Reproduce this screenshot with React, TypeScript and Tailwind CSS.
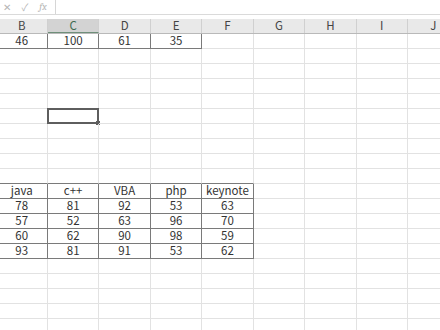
import React from 'react';

const COLS = ['B', 'C', 'D', 'E', 'F', 'G', 'H', 'I', 'J'];
const ROW_COUNT = 20;

// row index -> column index -> value
const DATA: Record<number, Record<number, string>> = {
  0: { 0: '46', 1: '100', 2: '61', 3: '35' },
  10: { 0: 'java', 1: 'c++', 2: 'VBA', 3: 'php', 4: 'keynote' },
  11: { 0: '78', 1: '81', 2: '92', 3: '53', 4: '63' },
  12: { 0: '57', 1: '52', 2: '63', 3: '96', 4: '70' },
  13: { 0: '60', 1: '62', 2: '90', 3: '98', 4: '59' },
  14: { 0: '93', 1: '81', 2: '91', 3: '53', 4: '62' },
};

function inTable(r: number, c: number) {
  if (r === 0) return c >= 0 && c <= 3;
  if (r >= 10 && r <= 14) return c >= 0 && c <= 4;
  return false;
}

const SEL = { r: 5, c: 1 };

function Cell({ r, c }: { r: number; c: number }) {
  const value = DATA[r]?.[c];
  const darkR = inTable(r, c) || inTable(r, c + 1);
  const darkB = inTable(r, c) || inTable(r + 1, c);
  const selected = r === SEL.r && c === SEL.c;
  return (
    <div
      className={[
        'relative h-[15px] border-r border-b flex items-center justify-center text-[11.5px] leading-none text-[#333]',
        darkR ? 'border-r-[#7a7a7a]' : 'border-r-[#e2e2e2]',
        darkB ? 'border-b-[#7a7a7a]' : 'border-b-[#e2e2e2]',
      ].join(' ')}
    >
      {value}
      {selected && (
        <span className="absolute -left-px -top-px -right-px -bottom-px border-2 border-[#5e5e5e]">
          <span className="absolute -right-[3px] -bottom-[3px] w-[4px] h-[4px] bg-[#5e5e5e]" />
        </span>
      )}
    </div>
  );
}

export default function App() {
  return (
    <div
      className="w-[440px] h-[330px] overflow-hidden bg-white"
      style={{ fontFamily: '"Noto Sans CJK SC", "Noto Sans", sans-serif' }}
    >
      {/* formula bar */}
      <div className="h-[15px] flex border-b border-[#dadada]">
        <div className="w-[55px] flex items-center text-[#b5b5b5] text-[10px] leading-none">
          <span className="ml-[2px] w-[10px] text-center">✕</span>
          <span className="ml-[8px] w-[10px] text-center">✓</span>
          <span className="ml-[8px] w-[10px] text-center italic font-serif">fx</span>
        </div>
        <div className="w-px bg-[#d6d6d6]" />
        <div className="flex-1" />
      </div>
      <div className="h-[4px]" />

      <div className="ml-[-3.5px]">
        {/* column headers */}
        <div className="grid grid-cols-[repeat(9,51.45px)] h-[15px] bg-[#e9e9e9] border-b border-[#b9b9b9]">
          {COLS.map((l, i) => (
            <div
              key={l}
              className={[
                'flex items-center justify-center text-[11.5px] leading-none border-r border-[#d0d0d0]',
                i === 1 ? 'bg-[#d3d3d3] text-[#3f6b50] border-b border-b-[#6f8f7a]' : 'text-[#444]',
              ].join(' ')}
            >
              {l}
            </div>
          ))}
        </div>

        {/* rows */}
        <div className="grid grid-cols-[repeat(9,51.45px)]">
          {Array.from({ length: ROW_COUNT }).map((_, r) =>
            COLS.map((_l, c) => <Cell key={`${r}-${c}`} r={r} c={c} />),
          )}
        </div>
      </div>
    </div>
  );
}
